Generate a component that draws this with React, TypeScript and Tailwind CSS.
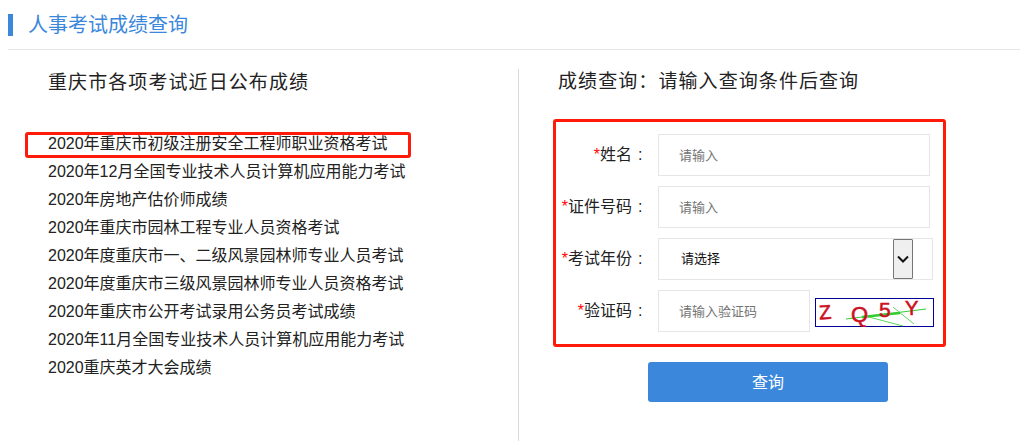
import React from "react";

const items = [
  "2020年重庆市初级注册安全工程师职业资格考试",
  "2020年12月全国专业技术人员计算机应用能力考试",
  "2020年房地产估价师成绩",
  "2020年重庆市园林工程专业人员资格考试",
  "2020年度重庆市一、二级风景园林师专业人员考试",
  "2020年度重庆市三级风景园林师专业人员资格考试",
  "2020年重庆市公开考试录用公务员考试成绩",
  "2020年11月全国专业技术人员计算机应用能力考试",
  "2020重庆英才大会成绩",
];

function Label({ text }: { text: string }) {
  return (
    <label className="w-[99px] shrink-0 text-right text-[16px] text-[#222] whitespace-nowrap mr-[3px]">
      <span className="text-[#f00]">*</span>
      {text}
      <span className="inline-block w-[23px] text-left pl-[6px]">:</span>
    </label>
  );
}

function Captcha() {
  return (
    <svg width="119" height="29" viewBox="0 0 119 29" className="ml-[5px] shrink-0 mt-[3px]">
      <rect x="0.5" y="0.5" width="118" height="28" fill="#fff" stroke="#000099" />
      <g stroke="#33cc33" fill="none">
        <path d="M31 21 L111 11" strokeWidth="1" />
        <path d="M47 19 L85 15" strokeWidth="2.5" />
        <path d="M50 18 L88 28" strokeWidth="0.8" />
        <path d="M78 9 L99 26" strokeWidth="0.8" />
      </g>
      <g fill="#cc1122" stroke="#cc1122" strokeWidth="0.6" fontFamily="'Liberation Sans', sans-serif">
        <text x="4" y="21" fontSize="20" transform="rotate(-4 10 15)">Z</text>
        <text x="36" y="24" fontSize="22">Q</text>
        <text x="64" y="19" fontSize="21">5</text>
        <text x="90" y="17" fontSize="20">Y</text>
      </g>
    </svg>
  );
}

const field =
  "h-[42px] border border-[#e6e6e6] bg-white pl-[20px] text-[13px] text-[#222] outline-none placeholder:text-[#757575]";

export default function App() {
  return (
    <div
      className="relative w-[1020px] h-[441px] overflow-hidden bg-white text-[#222]"
      style={{ fontFamily: '"Liberation Sans", "Noto Sans CJK SC", sans-serif' }}
    >
      <header className="ml-2 h-[50px] border-b border-[#e6e6e6] flex items-center">
        <div className="w-[5px] h-[22px] bg-[#3b87db]" />
        <h1 className="ml-[15px] text-[20px] leading-[24px] text-[#3b87db]">人事考试成绩查询</h1>
      </header>

      <div className="flex mt-[19px]">
        <section className="w-[519px] h-[372px] border-r border-[#d9d9d9] pl-[48px] shrink-0">
          <h2 className="text-[19px] leading-[28px] tracking-[1.08px] font-normal">重庆市各项考试近日公布成绩</h2>
          <ul className="mt-[33px] text-[16px] leading-[28px]">
            {items.map((t) => (
              <li key={t} className="whitespace-nowrap">{t}</li>
            ))}
          </ul>
        </section>

        <section className="pl-[34px] w-[440px]">
          <h2 className="ml-[5px] text-[19px] leading-[26px] tracking-[1.08px] font-normal whitespace-nowrap">成绩查询：请输入查询条件后查询</h2>
          <form className="mt-[24px]">
            <div className="w-[393px] h-[228px] border-[3px] border-[#ff1a0a] rounded-[3px] pt-[12px] flex flex-col gap-[10px]">
              <div className="flex items-center">
                <Label text="姓名" />
                <input className={`${field} w-[272px]`} placeholder="请输入" />
              </div>
              <div className="flex items-center">
                <Label text="证件号码" />
                <input className={`${field} w-[272px]`} placeholder="请输入" />
              </div>
              <div className="flex items-center">
                <Label text="考试年份" />
                <div className="relative w-[275px] h-[42px] border border-[#e6e6e6] pl-[22px] flex items-center text-[13px] text-[#111]">
                  请选择
                  <div className="absolute right-[19px] top-0 w-[20px] h-[40px] bg-[#efefef] border border-[#767676] rounded-[1px] flex items-center justify-center">
                    <svg width="12" height="8" viewBox="0 0 12 8">
                      <path d="M1 1.5 L6 6.5 L11 1.5" fill="none" stroke="#111" strokeWidth="2" />
                    </svg>
                  </div>
                </div>
              </div>
              <div className="flex items-center">
                <Label text="验证码" />
                <input className={`${field} w-[152px]`} placeholder="请输入验证码" />
                <Captcha />
              </div>
            </div>
            <button
              type="button"
              className="mt-[15px] ml-[95px] block w-[240px] h-[40px] rounded-[3px] bg-[#3b87db] pt-[2px] text-white text-[16px]"
            >
              查询
            </button>
          </form>
        </section>
      </div>

      <div className="absolute left-[25px] top-[132px] w-[386px] h-[26px] border-[3px] border-[#ff1a0a] rounded-[3px]" />
    </div>
  );
}
